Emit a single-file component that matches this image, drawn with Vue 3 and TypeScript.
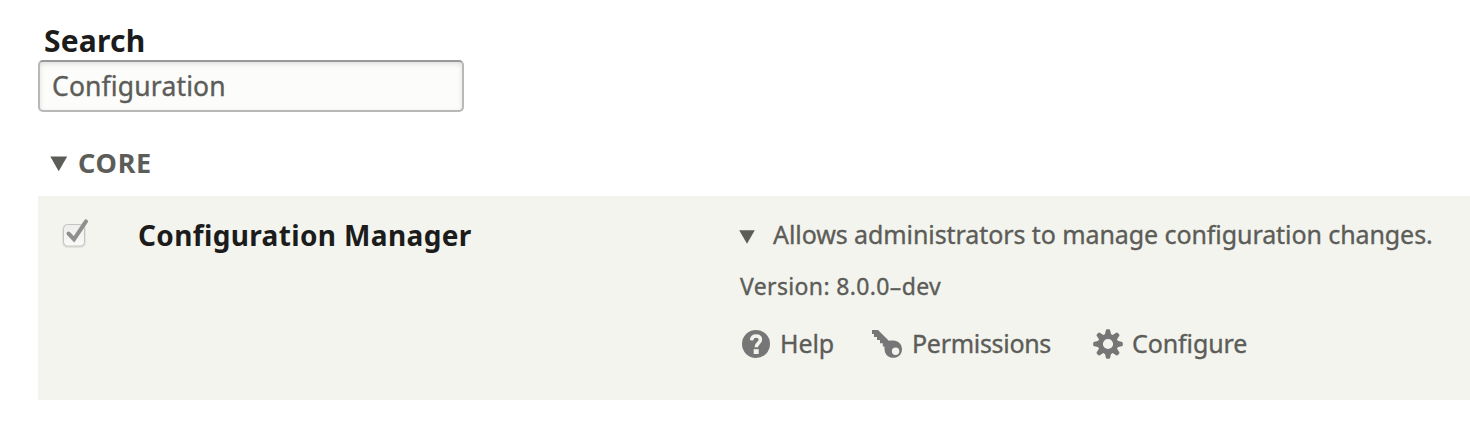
<script setup lang="ts">
import { ref } from 'vue'

const query = ref('Configuration')
</script>

<template>
  <main class="page">
    <label class="search-label" for="search"><span>Search</span></label>
    <input id="search" v-model="query" class="search-input" type="text" spellcheck="false" />

    <h2 class="group">
      <svg class="group-arrow" viewBox="0 0 18 16"><path d="M0.3 0.5H17.2L8.7 15.3Z" fill="#5c5c58" /></svg>
      <span>CORE</span>
    </h2>

    <section class="module">
      <div class="check">
        <svg width="32" height="36" viewBox="0 0 32 36">
          <defs>
            <linearGradient id="box" x1="0" y1="0" x2="0" y2="1">
              <stop offset="0" stop-color="#ededeb" />
              <stop offset="1" stop-color="#fafaf9" />
            </linearGradient>
          </defs>
          <rect x="3" y="10" width="22" height="22" rx="4.5" fill="none" stroke="#deded9" stroke-width="1.5" />
          <rect x="3.5" y="9.5" width="21" height="21.5" rx="4" fill="url(#box)" stroke="#c4c4c1" />
          <path d="M8.5 18.5L14 24.3L26 6.3" fill="none" stroke="#8f8f8d" stroke-width="4" stroke-linecap="round" stroke-linejoin="miter" />
        </svg>
      </div>
      <h3 class="name"><span>Configuration Manager</span></h3>
      <div class="details">
        <div class="summary">
          <svg class="summary-arrow" viewBox="0 0 16 14"><path d="M0.2 0.3H15.8L8 13.8Z" fill="#5c5c58" /></svg>
          <span>Allows administrators to manage configuration changes.</span>
        </div>
        <div class="version"><span>Version: 8.0.0–dev</span></div>
        <nav class="links">
          <a class="link help">
            <svg width="30" height="30" viewBox="0 0 30 30">
              <circle cx="15" cy="15" r="14" fill="#767676" />
              <path d="M10.6 11.3C10.8 8.4 12.5 7 15.2 7C17.9 7 19.4 8.6 19.4 10.8C19.4 14.2 15.3 14.2 15.2 18.2" fill="none" stroke="#f3f4ee" stroke-width="3.5" />
              <rect x="12.7" y="20.2" width="5" height="4.8" fill="#f3f4ee" />
            </svg>
            <span>Help</span>
          </a>
          <a class="link permissions">
            <svg width="30" height="30" viewBox="0 0 30 30">
              <path fill-rule="evenodd" fill="#767676" d="M0 1H6L16.8 11.8C18.2 11.4 19.7 11.4 21.3 11.4C26.3 11.4 30 15.3 30 20.2C30 25.2 26.1 28.8 21.3 28.8C16.5 28.8 12.6 25.2 12.6 20.4C12.6 19.3 12.1 18.3 12.7 17.5H10.8V14.2H8V11H5V8H2V5H0ZM23.6 18.5A3.7 3.7 0 1 0 23.6 25.9A3.7 3.7 0 1 0 23.6 18.5Z" />
            </svg>
            <span>Permissions</span>
          </a>
          <a class="link configure">
            <svg width="30" height="30" viewBox="0 0 30 30">
              <g fill="#767676">
                <path v-for="n in 8" :key="n" :transform="`rotate(${n * 45} 15 15)`" d="M11.6 7L12.8 1.4Q13 .2 14.1 .2H15.9Q17 .2 17.2 1.4L18.4 7Z" />
              </g>
              <circle cx="15" cy="15" r="7.7" fill="none" stroke="#767676" stroke-width="5.2" />
            </svg>
            <span>Configure</span>
          </a>
        </nav>
      </div>
    </section>
  </main>
</template>

<style>
body {
  margin: 0;
  background: #fff;
}
</style>

<style scoped>
.page {
  box-sizing: border-box;
  height: 448px;
  padding: 20px 0 0 38px;
  overflow: hidden;
  color: #5c5c58;
  font-family: "Noto Sans", sans-serif;
  white-space: nowrap;
}
.search-label {
  display: block;
  height: 40px;
  padding-left: 6px;
  color: #1b1c1b;
  font-size: 30px;
  font-weight: 700;
  line-height: 41px;
  letter-spacing: 0.2px;
}
.search-input {
  display: block;
  box-sizing: border-box;
  width: 426px;
  height: 52px;
  padding: 0 12px;
  border: 2px solid #b8b8b8;
  border-top-color: #999;
  border-radius: 5px;
  outline: none;
  background: #fcfcfa;
  box-shadow: inset 0 2px 5px rgba(0, 0, 0, 0.12);
  color: #5c5c58;
  font-family: "Noto Sans", sans-serif;
  font-size: 26.5px;
  letter-spacing: 0.15px;
  -webkit-text-stroke: 0.35px #5c5c58;
}
.group {
  display: flex;
  align-items: center;
  height: 84px;
  margin: 0;
  padding: 20px 0 0 12px;
  box-sizing: border-box;
  font-size: 27px;
  line-height: 38px;
  letter-spacing: 0.75px;
}
.group-arrow {
  width: 18px;
  height: 16px;
  margin-right: 10px;
}
.group span {
  margin-top: -2px;
}
.module {
  display: grid;
  grid-template-columns: 100px 602px 1fr;
  height: 204px;
  background: #f3f4ee;
}
.check {
  padding: 19px 0 0 22px;
}
.name {
  margin: 0;
  padding-top: 19px;
  color: #1b1c1b;
  font-size: 28px;
  line-height: 40px;
  letter-spacing: 0.36px;
}
.details {
  -webkit-text-stroke: 0.35px #5c5c58;
}
.details svg {
  -webkit-text-stroke: 0;
}
.summary {
  display: flex;
  align-items: center;
  height: 40px;
  padding-top: 19px;
  font-size: 25px;
  line-height: 40px;
  letter-spacing: -0.08px;
}
.summary span {
  margin-top: -2px;
}
.summary-arrow {
  width: 16px;
  height: 14px;
  margin: 4px 18px 0 -1px;
}
.version {
  height: 36px;
  padding-top: 13px;
  font-size: 23px;
  line-height: 36px;
  letter-spacing: 0.36px;
}
.links {
  display: flex;
  padding: 20px 0 0 1px;
  font-size: 25px;
  line-height: 40px;
  letter-spacing: -0.1px;
}
.link {
  display: flex;
  align-items: center;
  box-sizing: border-box;
  height: 40px;
}
.link span {
  margin-top: -2px;
}
.link svg {
  flex: none;
  margin-right: 9px;
}
.help {
  width: 131px;
}
.permissions {
  width: 221px;
}
.permissions svg {
  margin-right: 10px;
}
.permissions span {
  letter-spacing: -0.3px;
}
</style>
